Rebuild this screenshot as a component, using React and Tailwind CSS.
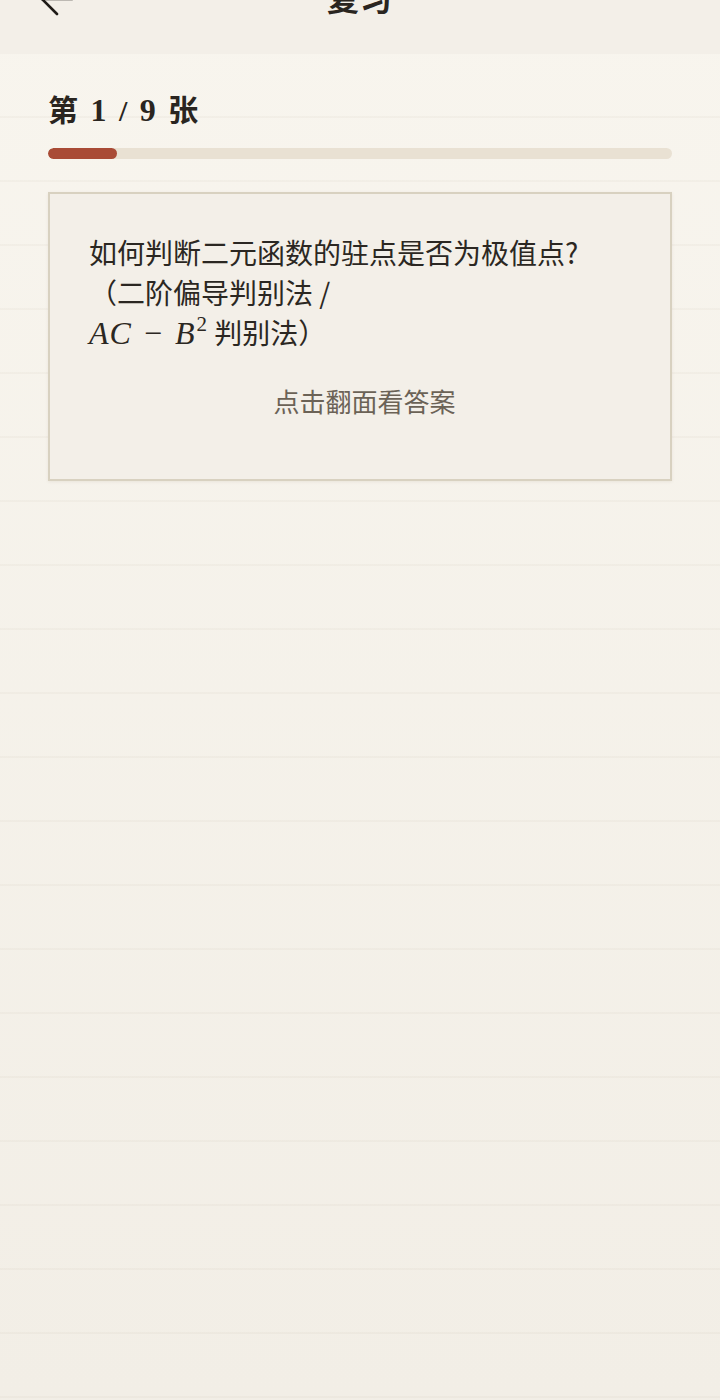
export default function App() {
  const done = 1;
  const total = 9;
  const pct = (done / total) * 100;

  return (
    <div className="min-h-screen bg-gradient-to-b from-[#f8f5ee] to-[#f2eee6] font-['Noto_Sans_CJK_SC',sans-serif] text-[#2a2520]">
      <header className="h-[54px] bg-[#f3efe8] grid grid-cols-[1fr_auto_1fr] items-start overflow-hidden">
        <div className="pl-[36px] -mt-[20px]">
          <svg width="40" height="40" viewBox="0 0 40 40" fill="none" stroke="#1f1b17" strokeWidth="2.6" strokeLinecap="round" strokeLinejoin="round">
            <path d="M21 4 6 19l15 15" />
            <path d="M6 19h30" />
          </svg>
        </div>
        <h1 className="-mt-[18px] leading-[36px] text-[32px] font-bold tracking-[1px] font-['Liberation_Serif','Noto_Sans_CJK_SC',serif]">
          复习
        </h1>
        <div />
      </header>

      <main className="min-h-[1346px] bg-[repeating-linear-gradient(to_bottom,transparent_0px,transparent_62px,rgba(130,110,80,0.045)_62px,rgba(130,110,80,0.045)_64px)] px-[48px] pt-[36px]">
        <h2 className="text-[30px] leading-[40px] font-bold tracking-[2.5px] font-['Liberation_Serif','Noto_Sans_CJK_SC',serif] text-[#2a2520]">
          第 <span className="text-[32px]">1</span> / <span className="text-[32px]">9</span> 张
        </h2>

        <div className="mt-[17px] h-[11px] w-full rounded-full bg-[#e9e1d3] overflow-hidden">
          <div className="h-full rounded-full bg-[#a94b36]" style={{ width: `${pct}%` }} />
        </div>

        <div className="mt-[33px] border-2 border-[#d8d1c0] bg-[#f3efe8] shadow-[0_1px_3px_rgba(90,70,40,0.08)] pl-[39px] pr-[30px] pt-[38px] pb-[60px]">
          <p className="text-[28px] leading-[40px] text-[#2b2722]">
            如何判断二元函数的驻点是否为极值点?
            <br />
            （二阶偏导判别法 /
            <br />
            <span className="font-['Liberation_Serif',serif] italic text-[32px] leading-[40px] tracking-[1px]">
              AC<span className="not-italic mx-[12px]">−</span>B<sup className="not-italic text-[21px] -top-[13px] ml-[1px]">2</sup>
            </span>{" "}
            判别法）
          </p>
          <p className="mt-[30px] text-center text-[26px] leading-[36px] text-[#6b6256]">
            点击翻面看答案
          </p>
        </div>
      </main>
    </div>
  );
}
